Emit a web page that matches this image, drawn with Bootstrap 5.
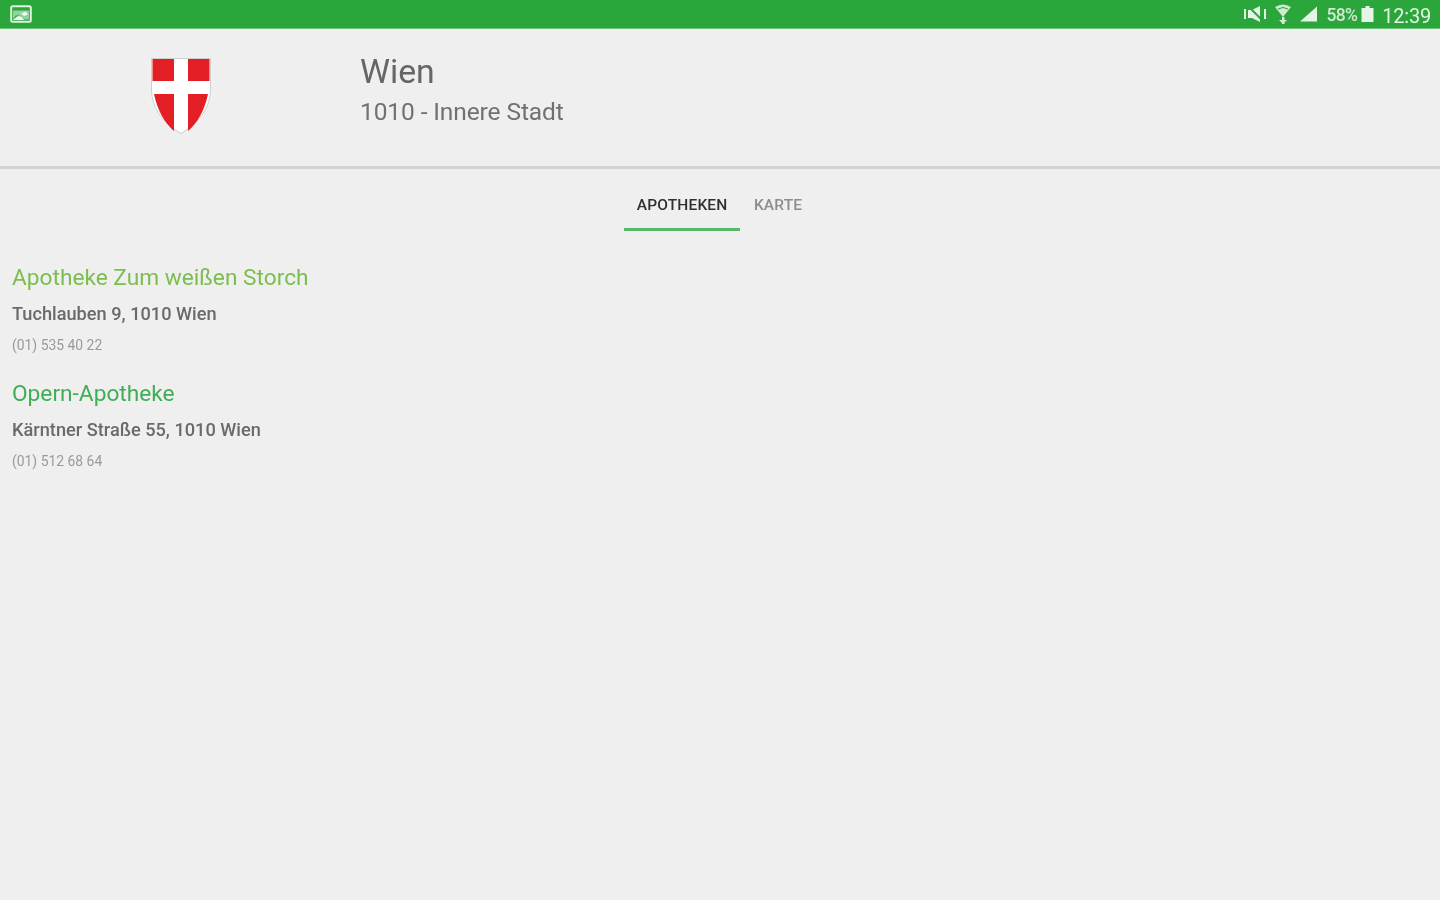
<!DOCTYPE html>
<html lang="de">
<head>
<meta charset="utf-8">
<title>Wien</title>
<link href="https://cdn.jsdelivr.net/npm/bootstrap@5.3.0/dist/css/bootstrap.min.css" rel="stylesheet">
<style>
html,body{height:100%}
body{background:#efefef;font-family:Roboto,"Liberation Sans",sans-serif;color:#666}
.soft-view{filter:blur(.55px);min-height:100%}
.statusbar{height:28px;background:#2aa63a;color:#e4f4e6;padding:0 9px 0 10px;box-shadow:0 1px 0 #6fc27a}
.status-time{font-size:20px;line-height:28px;letter-spacing:-.2px;margin-top:3px;margin-left:8px}
.status-pct{font-size:17.5px;font-weight:500;line-height:28px;margin-top:1px;letter-spacing:-.7px;color:#cfe9d2;margin-left:9px}
.status-wifi{margin-left:5px}
.status-signal{margin-left:8px}
.status-batt{margin-left:4px}
.head-band{height:141px;border-bottom:3px solid #d3d3d3}
.crest-col{width:360px}
.crest-col svg{display:block;margin:30px 0 0 151px}
.head-title{font-size:33.8px;line-height:38px;color:#666;margin-top:25px}
.head-sub{font-size:24.5px;line-height:30px;color:#717171;margin-top:6px;letter-spacing:-.1px}
.tab-strip{height:62px}
.tab-item{font-size:15.5px;font-weight:500;letter-spacing:.15px;padding:0 14px 0 13.5px;line-height:72px;height:62px;color:#8c8c8c}
.tab-on{color:#2f2f2f;border-bottom:3px solid #56b868;padding:0 13px}
.ph-list{padding:32px 12px 0}
.ph-entry{height:116px}
.ph-name{font-size:22.7px;line-height:30px}
.ph-lime{color:#7cbd4f}
.ph-green{color:#3fae55}
.ph-addr{font-size:18.2px;font-weight:500;line-height:22px;color:#6a6a6a;margin-top:10px}
.ph-tel{font-size:13.9px;line-height:16px;color:#9a9a9a;margin-top:12px}
</style>
</head>
<body>
<div class="soft-view">
<div class="statusbar d-flex align-items-center justify-content-between">
  <svg width="22" height="18" viewBox="0 0 22 18" aria-hidden="true"><rect x="1.2" y="1.2" width="19.6" height="15.6" rx="1.5" fill="none" stroke="#dff2e2" stroke-width="2"/><path d="M3 14.5V5.5H19V14.5H14Q12 11 9 10.5Q7 10 5.5 11Z" fill="#8fd29a"/><path d="M3 15L7 11.5Q11 9.5 14 15Z" fill="#eef8ef"/><path d="M11 8.5L15.5 6.5 18 9.5 14 11Z" fill="#eef8ef"/></svg>
  <div class="d-flex align-items-center">
    <svg width="26" height="18" viewBox="0 0 26 18" aria-hidden="true"><g fill="#e4f4e6"><rect x="1" y="4" width="2" height="10"/><path d="M5 5H9L17 1V17L9 13H5Z"/><rect x="21" y="4" width="2" height="10"/></g><path d="M6 2L20 16" stroke="#2aa63a" stroke-width="2"/></svg>
    <svg class="status-wifi" width="18" height="22" viewBox="0 0 18 22" aria-hidden="true"><path d="M1 4Q9-1 17 4L9 14Z" fill="#cfe9d2"/><path d="M4 6Q9 3 14 6" stroke="#2aa63a" fill="none"/><rect x="8" y="14" width="2.4" height="7" fill="#e4f4e6"/><path d="M5 17H13L9 21Z" fill="#cfe9d2"/></svg>
    <svg class="status-signal" width="18" height="16" viewBox="0 0 18 16" aria-hidden="true"><path d="M0 15.5L17 .5V15.5Z" fill="#e4f4e6"/></svg>
    <span class="status-pct">58%</span>
    <svg class="status-batt" width="13" height="16" viewBox="0 0 13 16" aria-hidden="true"><path d="M4.5 0H8.5V2H12.5V16H.5V2H4.5Z" fill="#e4f4e6"/></svg>
    <span class="status-time">12:39</span>
  </div>
</div>
<header class="head-band d-flex">
  <div class="crest-col flex-shrink-0">
    <svg width="60" height="76" viewBox="0 0 60 76" aria-hidden="true">
      <path d="M.5 .5H59.5V32Q59 58 30 75.5Q1 58 .5 32Z" fill="#fff" stroke="#c4c4c4" stroke-width=".8"/>
      <path d="M1.5 1H23V23H1.5ZM37 1H58.5V23H37ZM3 36H23V73Q8 60 3 36ZM37 36H57Q52 60 37 73Z" fill="#e31e24"/>
    </svg>
  </div>
  <div>
    <div class="head-title">Wien</div>
    <div class="head-sub">1010 - Innere Stadt</div>
  </div>
</header>
<nav class="tab-strip d-flex justify-content-center">
  <div class="tab-item tab-on">APOTHEKEN</div>
  <div class="tab-item">KARTE</div>
</nav>
<main class="ph-list">
  <div class="ph-entry">
    <div class="ph-name ph-lime">Apotheke Zum weißen Storch</div>
    <div class="ph-addr">Tuchlauben 9, 1010 Wien</div>
    <div class="ph-tel">(01) 535 40 22</div>
  </div>
  <div class="ph-entry">
    <div class="ph-name ph-green">Opern-Apotheke</div>
    <div class="ph-addr">Kärntner Straße 55, 1010 Wien</div>
    <div class="ph-tel">(01) 512 68 64</div>
  </div>
</main>
</div>
<script src="https://cdn.jsdelivr.net/npm/bootstrap@5.3.0/dist/js/bootstrap.bundle.min.js"></script>
</body>
</html>
